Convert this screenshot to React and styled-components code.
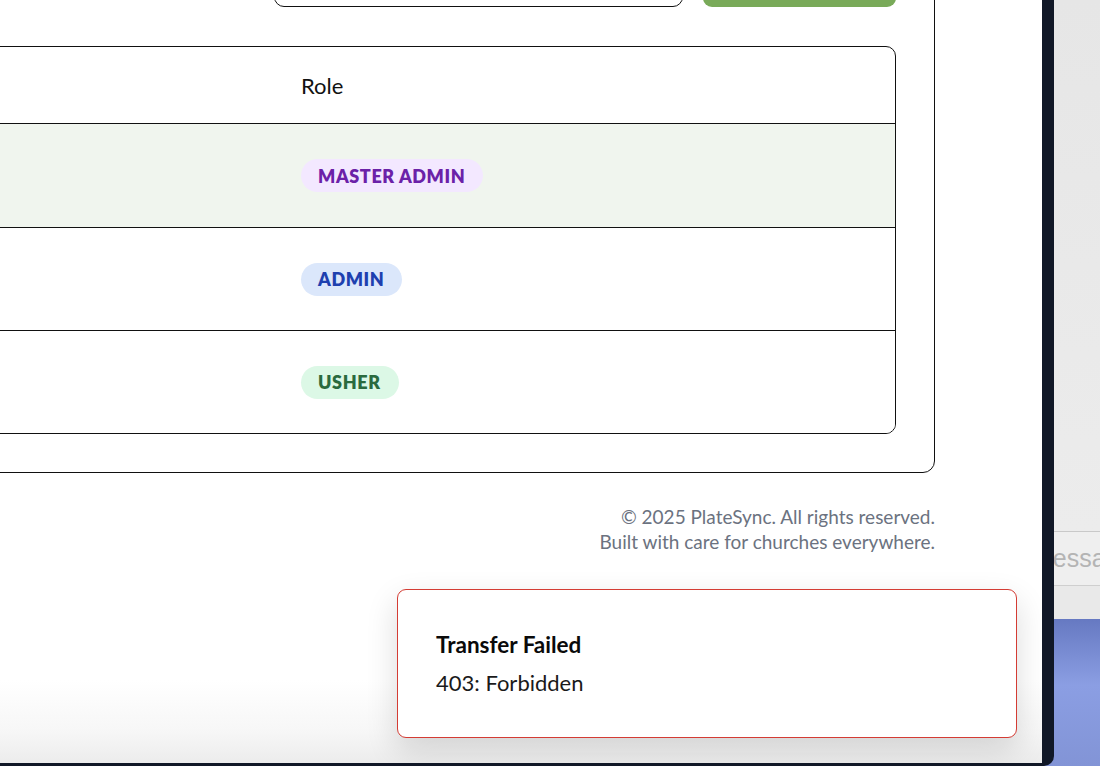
import styled, { createGlobalStyle } from "styled-components";

const GlobalStyle = createGlobalStyle`
  html, body {
    margin: 0;
    padding: 0;
    background: #e8e8e8;
  }
  body {
    font-family: Lato, "Open Sans", sans-serif;
    color: #111;
  }
  * {
    box-sizing: border-box;
  }
`;

const members = [
  { name: "Pastor Dan", email: "dan@grace.org", role: "master" },
  { name: "Ruth Miles", email: "ruth@grace.org", role: "admin" },
  { name: "Tom Reyes", email: "tom@grace.org", role: "usher" },
];

const roleLabels = {
  master: "Master Admin",
  admin: "Admin",
  usher: "Usher",
};

const App = () => {
  return (
    <>
      <GlobalStyle />
      <Screen>
        <WindowFrame>
          <Page>
            <Main>
              <Card>
                <Toolbar>
                  <SearchInput placeholder="" />
                  <AddButton>Add Member</AddButton>
                </Toolbar>

                <Table>
                  <HeaderRow>
                    <Cell>Member</Cell>
                    <Cell>Role</Cell>
                  </HeaderRow>
                  {members.map((m, i) => (
                    <Row key={m.email} $highlight={i === 0}>
                      <Cell>
                        <Name>{m.name}</Name>
                      </Cell>
                      <Cell>
                        <Badge $role={m.role}>{roleLabels[m.role]}</Badge>
                      </Cell>
                    </Row>
                  ))}
                </Table>
              </Card>

              <Footer>
                <div>© 2025 PlateSync. All rights reserved.</div>
                <div>Built with care for churches everywhere.</div>
              </Footer>
            </Main>

            <Toast>
              <ToastTitle>Transfer Failed</ToastTitle>
              <ToastBody>403: Forbidden</ToastBody>
            </Toast>
          </Page>
        </WindowFrame>

        <Backdrop>
          <BackdropTop />
          <MessageStrip>Message</MessageStrip>
          <BackdropGap />
          <BackdropBlue />
        </Backdrop>
      </Screen>
    </>
  );
};

const Screen = styled.div`
  display: flex;
  width: 1100px;
  height: 766px;
  overflow: hidden;
`;

const WindowFrame = styled.div`
  display: flex;
  width: 1054px;
  flex-shrink: 0;
  height: 766px;
  background: #111827;
  padding: 0 12px 3px 0;
  border-bottom-right-radius: 10px;
  position: relative;
  z-index: 1;
`;

const Page = styled.div`
  position: relative;
  flex: 1;
  overflow: hidden;
  background: linear-gradient(
    to bottom,
    #ffffff 0,
    #ffffff 680px,
    #f7f7f7 730px,
    #ececec 100%
  );
`;

const Main = styled.div`
  width: 1235px;
  margin-left: -300px;
  margin-top: -100px;
`;

const Card = styled.div`
  border: 1px solid #111;
  border-radius: 12px;
  padding: 62px 38px 38px 38px;
  background: #fff;
`;

const Toolbar = styled.div`
  display: flex;
  justify-content: flex-end;
  gap: 20px;
  height: 44px;
  margin-bottom: 39px;
`;

const SearchInput = styled.input`
  width: 409px;
  height: 44px;
  border: 1px solid #111;
  border-radius: 10px;
  font-family: inherit;
  font-size: 18px;
  padding: 0 14px;
  outline: none;
`;

const AddButton = styled.button`
  width: 193px;
  height: 44px;
  border: none;
  border-radius: 9px;
  background: #79aa59;
  color: #fff;
  font-family: inherit;
  font-size: 18px;
  font-weight: 700;
`;

const Table = styled.div`
  border: 1px solid #111;
  border-radius: 10px;
  overflow: hidden;
`;

const HeaderRow = styled.div`
  display: grid;
  grid-template-columns: 538px 1fr;
  height: 77px;
  align-items: center;
  border-bottom: 1px solid #111;
  font-size: 22px;
  color: #111;
`;

const Row = styled.div`
  display: grid;
  grid-template-columns: 538px 1fr;
  height: ${(p) => (p.$highlight ? "104px" : "103px")};
  align-items: center;
  background: ${(p) => (p.$highlight ? "#f0f5ee" : "#fff")};
  border-bottom: 1px solid #111;

  &:last-child {
    border-bottom: none;
    height: 102px;
  }
`;

const Cell = styled.div`
  padding-left: 23px;
`;

const Name = styled.span`
  font-size: 18px;
`;

const badgeColors = {
  master: { bg: "#f3e8ff", fg: "#6b21a8" },
  admin: { bg: "#dbe7fb", fg: "#1e40af" },
  usher: { bg: "#dcf8e6", fg: "#2a6a3e" },
};

const Badge = styled.span`
  display: inline-flex;
  align-items: center;
  height: 33px;
  padding: 0 18px 0 17px;
  border-radius: 999px;
  font-size: 18px;
  font-weight: 800;
  text-transform: uppercase;
  letter-spacing: 0.6px;
  background: ${(p) => badgeColors[p.$role].bg};
  color: ${(p) => badgeColors[p.$role].fg};
`;

const Footer = styled.div`
  margin-top: 31px;
  text-align: right;
  font-size: 19px;
  line-height: 25px;
  color: #6b7280;
`;

const Toast = styled.div`
  position: absolute;
  right: 25px;
  bottom: 25px;
  width: 620px;
  height: 149px;
  padding: 40px 38px;
  background: #fff;
  border: 1px solid #d43c34;
  border-radius: 9px;
  box-shadow: 0 12px 32px rgba(0, 0, 0, 0.14);
`;

const ToastTitle = styled.div`
  font-size: 22.5px;
  font-weight: 700;
  line-height: 30px;
  color: #0a0a0a;
`;

const ToastBody = styled.div`
  margin-top: 8px;
  font-size: 22px;
  line-height: 30px;
  color: #1a1a1a;
`;

const Backdrop = styled.div`
  flex: 1;
  display: flex;
  flex-direction: column;
  overflow: hidden;
  margin-left: -12px;
`;

const BackdropTop = styled.div`
  height: 532px;
  background: linear-gradient(to bottom, #e6e6e6, #ececec);
  border-bottom: 1px solid #c9c9c9;
`;

const MessageStrip = styled.div`
  height: 54px;
  text-indent: -10px;
  display: flex;
  align-items: center;
  background: #efefef;
  border-bottom: 1px solid #cfcfcf;
  font-family: "Liberation Sans", Arial, sans-serif;
  font-size: 25px;
  color: #b4b4b4;
  white-space: nowrap;
`;

const BackdropGap = styled.div`
  height: 33px;
  background: #e9e9e9;
`;

const BackdropBlue = styled.div`
  flex: 1;
  background: linear-gradient(to bottom, #6679c2 0%, #8b9ee3 45%, #8294d6 100%);
`;

export default App;
